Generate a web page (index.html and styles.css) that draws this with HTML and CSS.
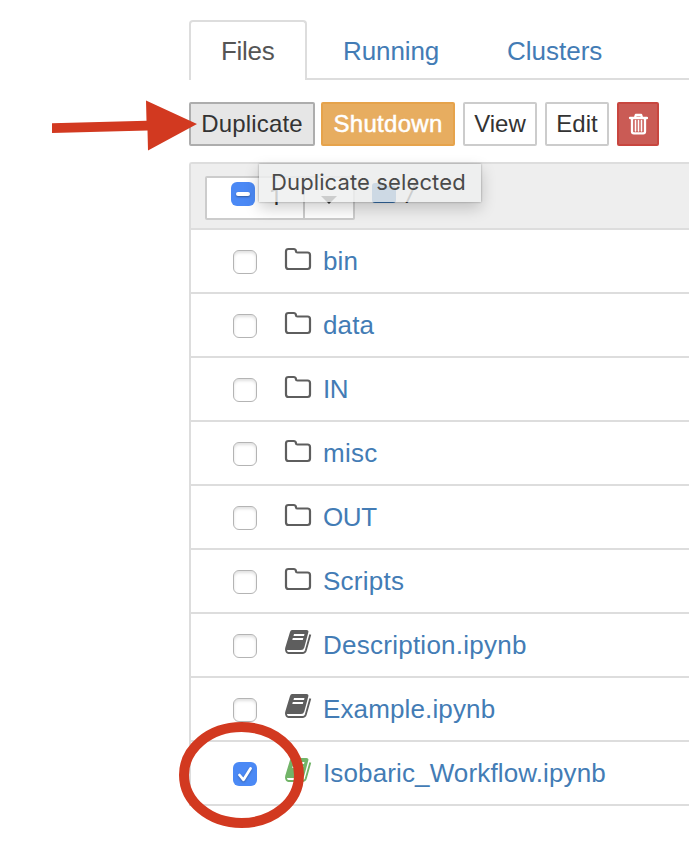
FILE: index.html
```html
<!DOCTYPE html>
<html lang="en">
<head>
<meta charset="utf-8">
<title>Files</title>
<link rel="stylesheet" href="styles.css">
</head>
<body>
<svg class="defs" width="0" height="0">
  <symbol id="folder" viewBox="0 0 28 28"><path d="M2 5.500Q2 3 4.500 3H9.500Q12 3 12 5.500Q12 6.500 13.500 6.500H23.500Q26 6.500 26 9V20.500Q26 23 23.500 23H4.500Q2 23 2 20.500Z" fill="none" stroke="#5e5e5e" stroke-width="2.200"/></symbol>
  <symbol id="book" viewBox="0 0 28 28">
    <path d="M8 2H22.500Q25 2 24.300 4.500L20.300 19.500Q19.600 22 17 22H3Q.8 22 1.300 19.500L6 4Q6.600 2 8 2zM10 6L9.500 8H20L20.500 6zM8.800 10L8.300 12H18.800L19.300 10z" fill-rule="evenodd"/>
    <path d="M1.900 20.500Q2 25 4.500 25H18.500Q21 25 21.800 22.500L26.300 6.500" fill="none" class="pages" stroke-width="1.900"/>
  </symbol>
</svg>
<main class="page">
  <nav class="tabs">
    <a class="tab active">Files</a>
    <a class="tab running">Running</a>
    <a class="tab clusters">Clusters</a>
  </nav>
  <div class="toolbar">
    <button class="btn duplicate">Duplicate</button>
    <button class="btn shutdown">Shutdown</button>
    <button class="btn view">View</button>
    <button class="btn edit">Edit</button>
    <button class="btn trash" aria-label="Delete">
      <svg width="20" height="22" viewBox="0 0 20 22"><path d="M2 5h17M7 4.500L7.800 2h5.400L14 4.500M4 5v13.500q0 1.800 1.800 1.800h9.400q1.800 0 1.800-1.800V5"/><path class="thin" d="M7.500 7.500v10.500M10.500 7.500v10.500M13.500 7.500v10.500"/></svg>
    </button>
  </div>
  <section class="panel">
    <header class="head">
      <div class="select"><span class="count"><span class="check mixed"></span><span>1</span></span><span class="drop"><i class="caret"></i></span></div>
      <svg class="home" width="24" height="22" viewBox="0 0 24 22"><path d="M3 1h6q3 0 3 3h9q3 0 3 3v11q0 3-3 3H3q-3 0-3-3V4q0-3 3-3z"/></svg>
      <span class="slash">/</span>
      <div class="tooltip">Duplicate selected</div>
    </header>
    <div class="row"><span class="check"></span><svg class="icon"><use href="#folder"/></svg><a>bin</a></div>
    <div class="row"><span class="check"></span><svg class="icon"><use href="#folder"/></svg><a>data</a></div>
    <div class="row"><span class="check"></span><svg class="icon"><use href="#folder"/></svg><a class="caps">IN</a></div>
    <div class="row"><span class="check"></span><svg class="icon"><use href="#folder"/></svg><a class="wide">misc</a></div>
    <div class="row"><span class="check"></span><svg class="icon"><use href="#folder"/></svg><a class="caps">OUT</a></div>
    <div class="row"><span class="check"></span><svg class="icon"><use href="#folder"/></svg><a class="wide">Scripts</a></div>
    <div class="row"><span class="check"></span><svg class="icon book"><use href="#book"/></svg><a class="wide">Description.ipynb</a></div>
    <div class="row"><span class="check"></span><svg class="icon book"><use href="#book"/></svg><a>Example.ipynb</a></div>
    <div class="row"><span class="check on"><svg width="24" height="24" viewBox="0 0 24 24"><path d="M6.500 13l4 4.800L17.500 6.500"/></svg></span><svg class="icon book live"><use href="#book"/></svg><a>Isobaric_Workflow.ipynb</a></div>
  </section>
</main>
<svg class="marks" width="689" height="860" viewBox="0 0 689 860">
  <path d="M52 123.300L146.500 120.800 146 100.500 197 124 148 150.500 147.500 130.500 52 133z" fill="#d23920"/>
  <ellipse cx="241.500" cy="775" rx="57.500" ry="48" fill="none" stroke="#d23920" stroke-width="10"/>
</svg>
</body>
</html>
```
FILE: styles.css
```css
* { box-sizing: border-box; }
body {
  margin: 0;
  height: 860px;
  overflow: hidden;
  position: relative;
  background: #fff;
  font-family: "Liberation Sans", Arial, sans-serif;
  font-size: 26px;
}
.defs { position: absolute; }
.page { padding: 20px 0 0 189px; }
.tabs {
  display: flex;
  height: 60px;
  background: linear-gradient(#ddd, #ddd) 4px 58px / 100% 2px no-repeat;
}
.tab { color: #437cb5; line-height: 62px; white-space: nowrap; }
.active {
  width: 118px;
  padding-left: 30px;
  line-height: 58px;
  letter-spacing: -.3px;
  color: #555;
  background: #fff;
  border: 2px solid #ddd;
  border-bottom: 0;
  border-radius: 4px 4px 0 0;
}
.running { margin-left: 36px; width: 164px; letter-spacing: -.1px; }
.toolbar { display: flex; margin-top: 22px; height: 44px; }
.btn {
  height: 44px;
  padding: 0;
  border: 2px solid #ccc;
  border-radius: 2px;
  background: #fff;
  color: #333;
  font: 24px/40px "Liberation Sans", Arial, sans-serif;
  white-space: nowrap;
}
.duplicate { width: 126px; background: #e6e6e6; border-color: #adadad; letter-spacing: .15px; }
.shutdown { width: 134px; margin-left: 6px; background: #e7ad60; border-color: #e6a34b; color: #fff; letter-spacing: .3px; -webkit-text-stroke: .5px #fff; }
.view { width: 74px; margin-left: 8px; }
.edit { width: 64px; margin-left: 8px; }
.trash { width: 42px; margin-left: 8px; display: flex; align-items: center; justify-content: center; background: #ca5b55; border-color: #c8463f; }
.trash svg { fill: none; stroke: #fff; stroke-width: 2.300; stroke-linecap: round; stroke-linejoin: round; }
.trash .thin { stroke-width: 1.600; }
.panel { margin-top: 16px; border-left: 2px solid #ddd; border-top: 2px solid #ddd; border-top-left-radius: 3px; }
.head {
  position: relative;
  display: flex;
  height: 66px;
  padding: 12px 0 0 14px;
  background: #eee;
  border-bottom: 2px solid #ddd;
}
.select { display: flex; width: 150px; height: 44px; background: #fff; border: 2px solid #ccc; border-radius: 2px; }
.count { display: flex; width: 98px; padding-left: 24px; border-right: 2px solid #ccc; font: 24px/38px Roboto, sans-serif; color: #333; }
.count .check { margin: 4px 14px 0 0; }
.drop { display: flex; flex: 1; justify-content: center; padding-top: 18px; }
.caret { width: 0; height: 0; border: 8px solid transparent; border-top-color: #333; border-bottom: 0; }
.home { margin: 6px 0 0 17px; fill: #3973b0; }
.slash { margin-left: 11px; line-height: 37px; font-style: italic; color: #333; }
.tooltip {
  position: absolute;
  left: 68px;
  top: 0;
  width: 222px;
  height: 38px;
  padding-left: 12px;
  background: rgba(238, 239, 239, .82);
  box-shadow: 0 0 2px rgba(0, 0, 0, .35), 0 6px 16px rgba(0, 0, 0, .2);
  color: #4a4a4a;
  font: 22px/37px Inter, sans-serif;
  letter-spacing: .12px;
  white-space: nowrap;
}
.row { display: flex; height: 64px; padding-left: 42px; border-bottom: 2px solid #ddd; }
.row a { margin-left: 11px; line-height: 62px; letter-spacing: .13px; color: #437cb5; white-space: nowrap; }
.row .wide { letter-spacing: .25px; }
.row .caps { letter-spacing: -.4px; }
.check {
  flex: none;
  width: 24px;
  height: 24px;
  margin-top: 20px;
  border: 1.500px solid #b4b4b4;
  border-radius: 6px;
  background: #fff;
  box-shadow: inset 0 2px 3px rgba(0, 0, 0, .12);
}
.mixed, .on { border: 0; background: #4b89f5; box-shadow: none; }
.mixed { display: flex; align-items: center; justify-content: center; }
.mixed::after { content: ""; width: 14px; height: 4px; border-radius: 2px; background: #fff; box-shadow: 0 1px 2px rgba(0, 0, 0, .35); }
.on svg { display: block; fill: none; stroke: #fff; stroke-width: 2.700; stroke-linecap: round; stroke-linejoin: round; filter: drop-shadow(0 1px 1px rgba(0, 0, 0, .3)); }
.icon { flex: none; width: 28px; height: 28px; margin: 16px 0 0 27px; fill: #5e5e5e; color: #5e5e5e; }
.pages { stroke: currentColor; }
.book { margin-top: 14px; }
.live { fill: #72b468; color: #72b468; }
.marks { position: absolute; left: 0; top: 0; pointer-events: none; }
```
